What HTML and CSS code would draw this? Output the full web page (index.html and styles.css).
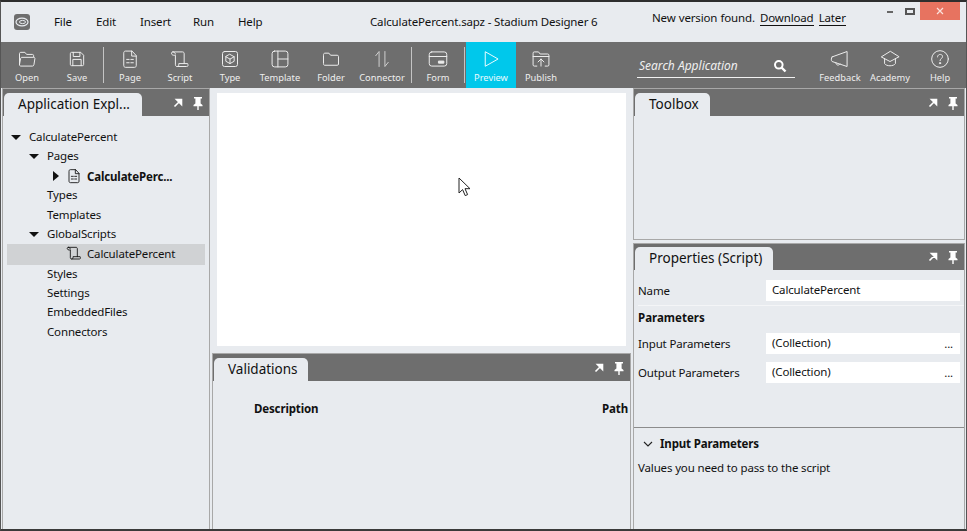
FILE: index.html
```html
<!DOCTYPE html>
<html lang="en">
<head>
    <meta charset="UTF-8">
    <title>CalculatePercent.sapz - Stadium Designer 6</title>
    <link rel="stylesheet" href="styles.css">
</head>
<body>
<svg class="defs">
    <defs>
        <symbol id="i-popout" viewBox="0 0 10 10"><path d="M1.500 8.500 7 3M3.500 1.500h5v5z" fill="#fff" stroke="#fff" stroke-width="1.600"/></symbol>
        <symbol id="i-pin" viewBox="0 0 10 13"><path d="M1 0h8v1.500H7.600v5L9.500 8v1.200H.5V8l1.900-1.500v-5H1zM4.300 9h1.400v4H4.300z" fill="#fff"/></symbol>
        <symbol id="i-script" viewBox="0 0 24 24"><path d="M3.500 3.500h11.500c1.500 0 2 1 2 2.500v11.500M3.500 3.500c-1.500 0-2 1-1.500 2.500.3 1 1.500 1.500 3 1.500h1.500V19c0 1.500 1 2 2 2h11.500c1.500 0 2-1 1.500-2.500l-.3-1H10.500v1.500c0 1.500-1 2-2 2M3.500 3.500c1.500 0 2.500.8 3 2.500" /></symbol>
        <symbol id="i-page" viewBox="0 0 24 24"><path d="M4.500 4.500c0-1 .7-2 2-2h8l5 5.500v12c0 1-.7 2-2 2h-11c-1.300 0-2-1-2-2zM14 2.500V8.500h5.500M8 12.500h3M13 12.500h3M8 16.500h3M13 16.500h3"/></symbol>
    </defs>
</svg>
<div class="window">
    <header class="titlebar">
        <div class="logo">
            <svg viewBox="0 0 16 16" width="16" height="16"><rect width="16" height="16" rx="3" fill="#6e6e6e"/><ellipse cx="8" cy="8" rx="6" ry="3.800" fill="none" stroke="#e8ebef" stroke-width="1.200"/><ellipse cx="8.500" cy="8" rx="3" ry="1.600" fill="none" stroke="#e8ebef"/></svg>
        </div>
        <nav class="menu">
            <span class="menu-file">File</span>
            <span class="menu-edit">Edit</span>
            <span class="menu-insert">Insert</span>
            <span class="menu-run">Run</span>
            <span class="menu-help">Help</span>
        </nav>
        <div class="app-title">CalculatePercent.sapz - Stadium Designer 6</div>
        <div class="update-note">New version found. <a class="link">Download</a> <a class="link">Later</a></div>
        <div class="win-controls">
            <span class="win-min"></span>
            <span class="win-max"></span>
            <span class="win-close">
                <svg viewBox="0 0 8 8" width="8" height="8"><path d="M1 1l6 6M7 1 1 7" stroke="#fbe3de" stroke-width="1.200"/></svg>
            </span>
        </div>
    </header>

    <div class="toolbar">
        <div class="tool">
            <svg viewBox="0 0 24 24"><path d="M3 19V5.500c0-.8.500-1.500 1.500-1.500h5l2 2.500h7c1 0 1.500.7 1.500 1.500v1.500M3 19c0 .7.700 1.500 1.500 1.500h14c1 0 1.500-.5 1.800-1.500l1.200-7.500c.1-1-.5-1.500-1.500-1.500H6c-1 0-1.500.5-1.700 1.500z"/></svg>
            <span>Open</span>
        </div>
        <div class="tool">
            <svg viewBox="0 0 24 24"><path d="M4 5.500C4 4.500 4.500 4 5.500 4h11L20 7.500v11c0 1-.5 1.500-1.500 1.500h-13c-1 0-1.500-.5-1.500-1.500zM7.500 4v5h8V4M7 20v-7.500h10V20"/></svg>
            <span>Save</span>
        </div>
        <i class="tool-sep"></i>
        <div class="tool">
            <svg viewBox="0 0 24 24"><use href="#i-page"/></svg>
            <span>Page</span>
        </div>
        <div class="tool">
            <svg viewBox="0 0 24 24"><use href="#i-script"/></svg>
            <span>Script</span>
        </div>
        <div class="tool">
            <svg viewBox="0 0 24 24"><rect x="3" y="3" width="18" height="18" rx="2.500"/><path d="M12 6.500l5 2.800v5.400l-5 2.800-5-2.800V9.300zM7 9.300l5 2.800 5-2.800M12 12.100v5.400"/></svg>
            <span>Type</span>
        </div>
        <div class="tool">
            <svg viewBox="0 0 24 24"><rect x="2.500" y="2.500" width="19" height="19" rx="3"/><path d="M9.500 2.500v19M9.500 12h12"/></svg>
            <span>Template</span>
        </div>
        <div class="tool tool-gap">
            <svg viewBox="0 0 24 24"><path d="M3 7c0-1 .5-2 1.500-2h5l2 2.500h8c1 0 1.500.7 1.500 1.500v9c0 1-.5 1.500-1.500 1.500h-15C3.500 19.500 3 19 3 18z"/></svg>
            <span>Folder</span>
        </div>
        <div class="tool tool-gap">
            <svg viewBox="0 0 24 24"><path d="M8.500 21V3L4.500 8M15.500 3v18l4-5" class="dim"/></svg>
            <span>Connector</span>
        </div>
        <i class="tool-sep tool-sep-wide"></i>
        <div class="tool">
            <svg viewBox="0 0 24 24"><rect x="1.500" y="3.500" width="21" height="17" rx="3"/><path d="M1.500 9h21"/><path d="M13 14.500h6v2.500h-6z" class="filled"/></svg>
            <span>Form</span>
        </div>
        <i class="tool-sep"></i>
        <div class="tool tool-active">
            <svg viewBox="0 0 24 24"><path d="M5.500 3.500 20.500 12l-15 8.500z"/></svg>
            <span>Preview</span>
        </div>
        <div class="tool">
            <svg viewBox="0 0 24 24"><path d="M7 20.500H4c-1 0-1.500-.5-1.500-1.500V5c0-1 .5-1.500 1.500-1.500h5l2 2.500h9c1 0 1.500.5 1.500 1.500V19c0 1-.5 1.500-1.500 1.500h-3M2.500 9h19M12 20.500V12M8.500 15.500 12 12l3.500 3.500"/></svg>
            <span>Publish</span>
        </div>
        <div class="search">
            <span class="search-text">Search Application</span>
            <svg viewBox="0 0 14 14" width="14" height="14"><circle cx="5.800" cy="5.800" r="3.800" fill="none" stroke="#fff" stroke-width="2"/><path d="M8.500 8.500l4 4" stroke="#fff" stroke-width="2.400"/></svg>
        </div>
        <div class="tool tool-right">
            <svg viewBox="0 0 24 24"><path d="M2.500 9.500 20.500 3v18l-18-6c-1.300-.5-1.300-5 0-5.500zM7 16.500c0 3 3.500 4 5 1.500"/></svg>
            <span>Feedback</span>
        </div>
        <div class="tool">
            <svg viewBox="0 0 24 24"><path d="M12 3 1.500 9.500 12 15l10.500-5.500zM5.500 11.500v6c2 3.500 11 3.500 13 0v-6"/></svg>
            <span>Academy</span>
        </div>
        <div class="tool">
            <svg viewBox="0 0 24 24"><circle cx="12" cy="12" r="10"/><path d="M9 9.500c0-4 6-4 6-.5 0 2.500-3 2.500-3 5"/><circle cx="12" cy="17" r=".8" class="filled"/></svg>
            <span>Help</span>
        </div>
    </div>

    <main class="workspace">
        <section class="panel explorer">
            <div class="panel-head">
                <div class="tab">Application Expl...</div>
                <div class="panel-actions">
                    <svg width="10" height="10"><use href="#i-popout"/></svg>
                    <svg width="10" height="13"><use href="#i-pin"/></svg>
                </div>
            </div>
            <ul class="tree">
                <li class="node lvl-0"><b class="arrow arrow-open"></b>CalculatePercent</li>
                <li class="node lvl-1"><b class="arrow arrow-open"></b>Pages</li>
                <li class="node lvl-2 node-strong"><b class="arrow arrow-closed"></b>
                    <svg class="node-icon" viewBox="0 0 24 24"><use href="#i-page"/></svg>CalculatePerc...</li>
                <li class="node lvl-1">Types</li>
                <li class="node lvl-1">Templates</li>
                <li class="node lvl-1"><b class="arrow arrow-open"></b>GlobalScripts</li>
                <li class="node lvl-2 node-selected">
                    <svg class="node-icon" viewBox="0 0 24 24"><use href="#i-script"/></svg>CalculatePercent</li>
                <li class="node lvl-1">Styles</li>
                <li class="node lvl-1">Settings</li>
                <li class="node lvl-1">EmbeddedFiles</li>
                <li class="node lvl-1">Connectors</li>
            </ul>
        </section>

        <div class="center">
            <div class="canvas"></div>
            <section class="panel validations">
                <div class="panel-head">
                    <div class="tab">Validations</div>
                    <div class="panel-actions">
                        <svg width="10" height="10"><use href="#i-popout"/></svg>
                        <svg width="10" height="13"><use href="#i-pin"/></svg>
                    </div>
                </div>
                <div class="grid-head">
                    <span>Description</span>
                    <span>Path</span>
                </div>
            </section>
        </div>

        <div class="right">
            <section class="panel toolbox">
                <div class="panel-head">
                    <div class="tab">Toolbox</div>
                    <div class="panel-actions">
                        <svg width="10" height="10"><use href="#i-popout"/></svg>
                        <svg width="10" height="13"><use href="#i-pin"/></svg>
                    </div>
                </div>
            </section>
            <section class="panel properties">
                <div class="panel-head">
                    <div class="tab">Properties (Script)</div>
                    <div class="panel-actions">
                        <svg width="10" height="10"><use href="#i-popout"/></svg>
                        <svg width="10" height="13"><use href="#i-pin"/></svg>
                    </div>
                </div>
                <div class="prop-row prop-name">
                    <label>Name</label>
                    <div class="prop-value">CalculatePercent</div>
                </div>
                <h4 class="prop-group">Parameters</h4>
                <div class="prop-row">
                    <label>Input Parameters</label>
                    <div class="prop-value">(Collection)<span class="dots">...</span></div>
                </div>
                <div class="prop-row">
                    <label>Output Parameters</label>
                    <div class="prop-value">(Collection)<span class="dots">...</span></div>
                </div>
                <div class="help-box">
                    <h4>
                        <svg viewBox="0 0 10 6" width="10" height="6"><path d="M1 1l4 4 4-4" fill="none" stroke="#222" stroke-width="1.100"/></svg>
                        Input Parameters
                    </h4>
                    <p>Values you need to pass to the script</p>
                </div>
            </section>
        </div>
    </main>

    <svg class="cursor" viewBox="0 0 13 20" width="13" height="20"><path d="M1 1v15l3.600-3.400 2.600 6 2.400-1-2.600-5.900h5z" fill="#fff" stroke="#222"/></svg>
</div>
</body>
</html>
```

FILE: styles.css
```css
* { box-sizing: border-box; }
html, body { margin: 0; padding: 0; }
body { width: 967px; height: 531px; overflow: hidden; font-family: "Noto Sans", "Open Sans", sans-serif; font-size: 11.5px; letter-spacing: -.15px; color: #111; background: #e8ebef; }
.defs { position: absolute; width: 0; height: 0; }

.window { position: relative; width: 967px; height: 531px; display: flex; flex-direction: column; border-top: 2px solid #2e2e2e; border-left: 1px solid #555; border-right: 1px solid #555; border-bottom: 2px solid #3a3a3a; }

/* title bar */
.titlebar { height: 40px; flex: none; display: flex; align-items: flex-start; background: #e8ebef; }
.logo { margin: 12px 0 0 13px; width: 16px; height: 16px; }
.logo svg { display: block; }
.menu { width: 340px; height: 40px; display: flex; padding-top: 11px; }
.menu span { display: block; line-height: 18px; }
.menu-file { margin-left: 24px; width: 42px; }
.menu-edit { width: 44px; }
.menu-insert { width: 53px; }
.menu-run { width: 45px; }
.app-title { margin-top: 11px; width: 282px; line-height: 18px; }
.update-note { margin-top: 7px; width: 235px; line-height: 18px; white-space: nowrap; word-spacing: .3px; }
.link { border-bottom: 1px solid #111; margin-left: 2px; }
.win-controls { display: flex; align-items: flex-start; }
.win-min { width: 6px; height: 2px; background: #666; margin-top: 9px; }
.win-max { width: 10px; height: 7px; border: 2px solid #555; margin: 6px 0 0 12px; }
.win-close { width: 40px; height: 18px; margin-left: 5px; background: #e77360; display: flex; align-items: center; justify-content: center; }

/* toolbar */
.toolbar { height: 46px; flex: none; display: flex; align-items: stretch; background: #6e6e6e; padding-left: 1px; }
.tool { width: 50px; flex: none; display: flex; flex-direction: column; align-items: center; color: #eee; font-size: 9.300px; letter-spacing: 0; padding-top: 7px; }
.tool svg { width: 20px; height: 20px; fill: none; stroke: #ececec; stroke-width: 1.200; stroke-linejoin: round; stroke-linecap: round; }
.tool svg .filled { fill: #ececec; }
.tool svg .dim { stroke: #cfcfcf; }
.tool span { margin-top: 2px; line-height: 14px; white-space: nowrap; }
.tool-gap { margin-left: 1px; }
.tool-sep { width: 1px; margin: 5px 1px; flex: none; background: #c4c4c4; }
.tool-sep-wide { margin-left: 4px; }
.tool-active { background: #00c8eb; color: #e8fbff; }
.tool-active svg { stroke: #eafcff; }
.search { width: 158px; height: 24px; margin: 12px 0 0 71px; flex: none; display: flex; align-items: center; justify-content: space-between; border-bottom: 1px solid #f2f2f2; padding: 0 8px 0 2px; color: #f0f0f0; font-size: 12px; letter-spacing: 0; font-style: italic; }
.tool-right { margin-left: 20px; }

/* dock panels */
.workspace { flex: 1; min-height: 0; display: grid; grid-template-columns: 209px 423px 1fr; background: #e8ebef; }
.panel { display: flex; flex-direction: column; background: #e8ebef; }
.panel-head { height: 28px; flex: none; display: flex; align-items: flex-end; justify-content: space-between; background: #6e6e6e; border-top: 1px solid #a8a8a8; padding-left: 1px; }
.tab { height: 23px; padding: 0 11px 0 14px; background: #e8ebef; border-radius: 5px 5px 0 0; font-size: 13.500px; letter-spacing: 0; line-height: 22px; white-space: nowrap; }
.panel-actions { display: flex; align-items: center; gap: 10px; height: 26px; padding-right: 6px; }
.panel-actions svg { display: block; }

.explorer { border-left: 1px solid #a8a8a8; border-right: 1px solid #a8a8a8; margin-left: 1px; }
.explorer .tab { width: 138px; }
.tree { list-style: none; margin: 11px 0 0 0; padding: 0; }
.node { position: relative; height: 19.200px; line-height: 19px; white-space: nowrap; display: flex; align-items: center; }
.lvl-0 { padding-left: 26px; }
.lvl-1 { padding-left: 44px; }
.lvl-2 { padding-left: 84px; }
.node-strong { font-weight: 700; height: 20px; margin: 1px 0 -1px; }
.node-selected { margin: 1px 4px -1px; height: 21px; padding: 0 0 2px 80px; background: #d0d2d4; }
.node-icon { position: absolute; width: 16px; height: 16px; fill: none; stroke: #111; stroke-width: 1.300; stroke-linejoin: round; stroke-linecap: round; left: 63px; top: 2px; }
.node-selected .node-icon { left: 59px; top: 1px; }
.arrow { position: absolute; width: 0; height: 0; }
.arrow-open { border-left: 5px solid transparent; border-right: 5px solid transparent; border-top: 5px solid #111; top: 8px; }
.lvl-0 .arrow-open { left: 8px; }
.lvl-1 .arrow-open { left: 26px; }
.arrow-closed { border-top: 5px solid transparent; border-bottom: 5px solid transparent; border-left: 6px solid #111; left: 50px; top: 5px; }

.center { display: flex; flex-direction: column; padding: 0 2px 0 2px; min-width: 0; }
.canvas { height: 253px; flex: none; background: #fff; margin: 5px 5px 0 5px; }
.validations { flex: 1; margin-top: 7px; border-right: 1px solid #a8a8a8; border-left: 1px solid #a8a8a8; }
.validations .tab { padding-right: 10px; }
.grid-head { display: flex; justify-content: space-between; font-weight: 700; padding: 19px 2px 0 41px; line-height: 18px; }

.right { display: flex; flex-direction: column; margin-right: 1px; }
.toolbox { height: 152px; flex: none; border: 1px solid #a8a8a8; border-top: 0; }
.properties { flex: 1; margin-top: 3px; border-left: 1px solid #a8a8a8; border-right: 1px solid #a8a8a8; }
.properties .panel-head { height: 27px; }
.prop-row { display: flex; align-items: center; height: 21px; margin: 8px 0 0 4px; flex: none; }
.prop-name { margin-top: 10px; }
.prop-row label { width: 128px; flex: none; }
.prop-value { width: 194px; height: 21px; background: #fff; padding: 0 5px 0 6px; line-height: 20px; display: flex; justify-content: space-between; }
.dots { line-height: 22px; padding-right: 2px; }
.prop-group { margin: 4px 0 -1px 4px; padding-top: 3px; border-top: 1px solid #f4f5f7; font-size: 11.500px; letter-spacing: 0; line-height: 17px; }
.help-box { margin-top: 44px; border-top: 1px solid #8c8c8c; padding-top: 7px; }
.help-box h4 { margin: 0; font-size: 11.500px; line-height: 17px; display: flex; align-items: center; gap: 7px; padding-left: 9px; }
.help-box p { margin: 7px 0 0 4px; line-height: 17px; }

/* mouse pointer over the canvas */
.cursor { position: absolute; left: 457px; top: 175px; }
```
